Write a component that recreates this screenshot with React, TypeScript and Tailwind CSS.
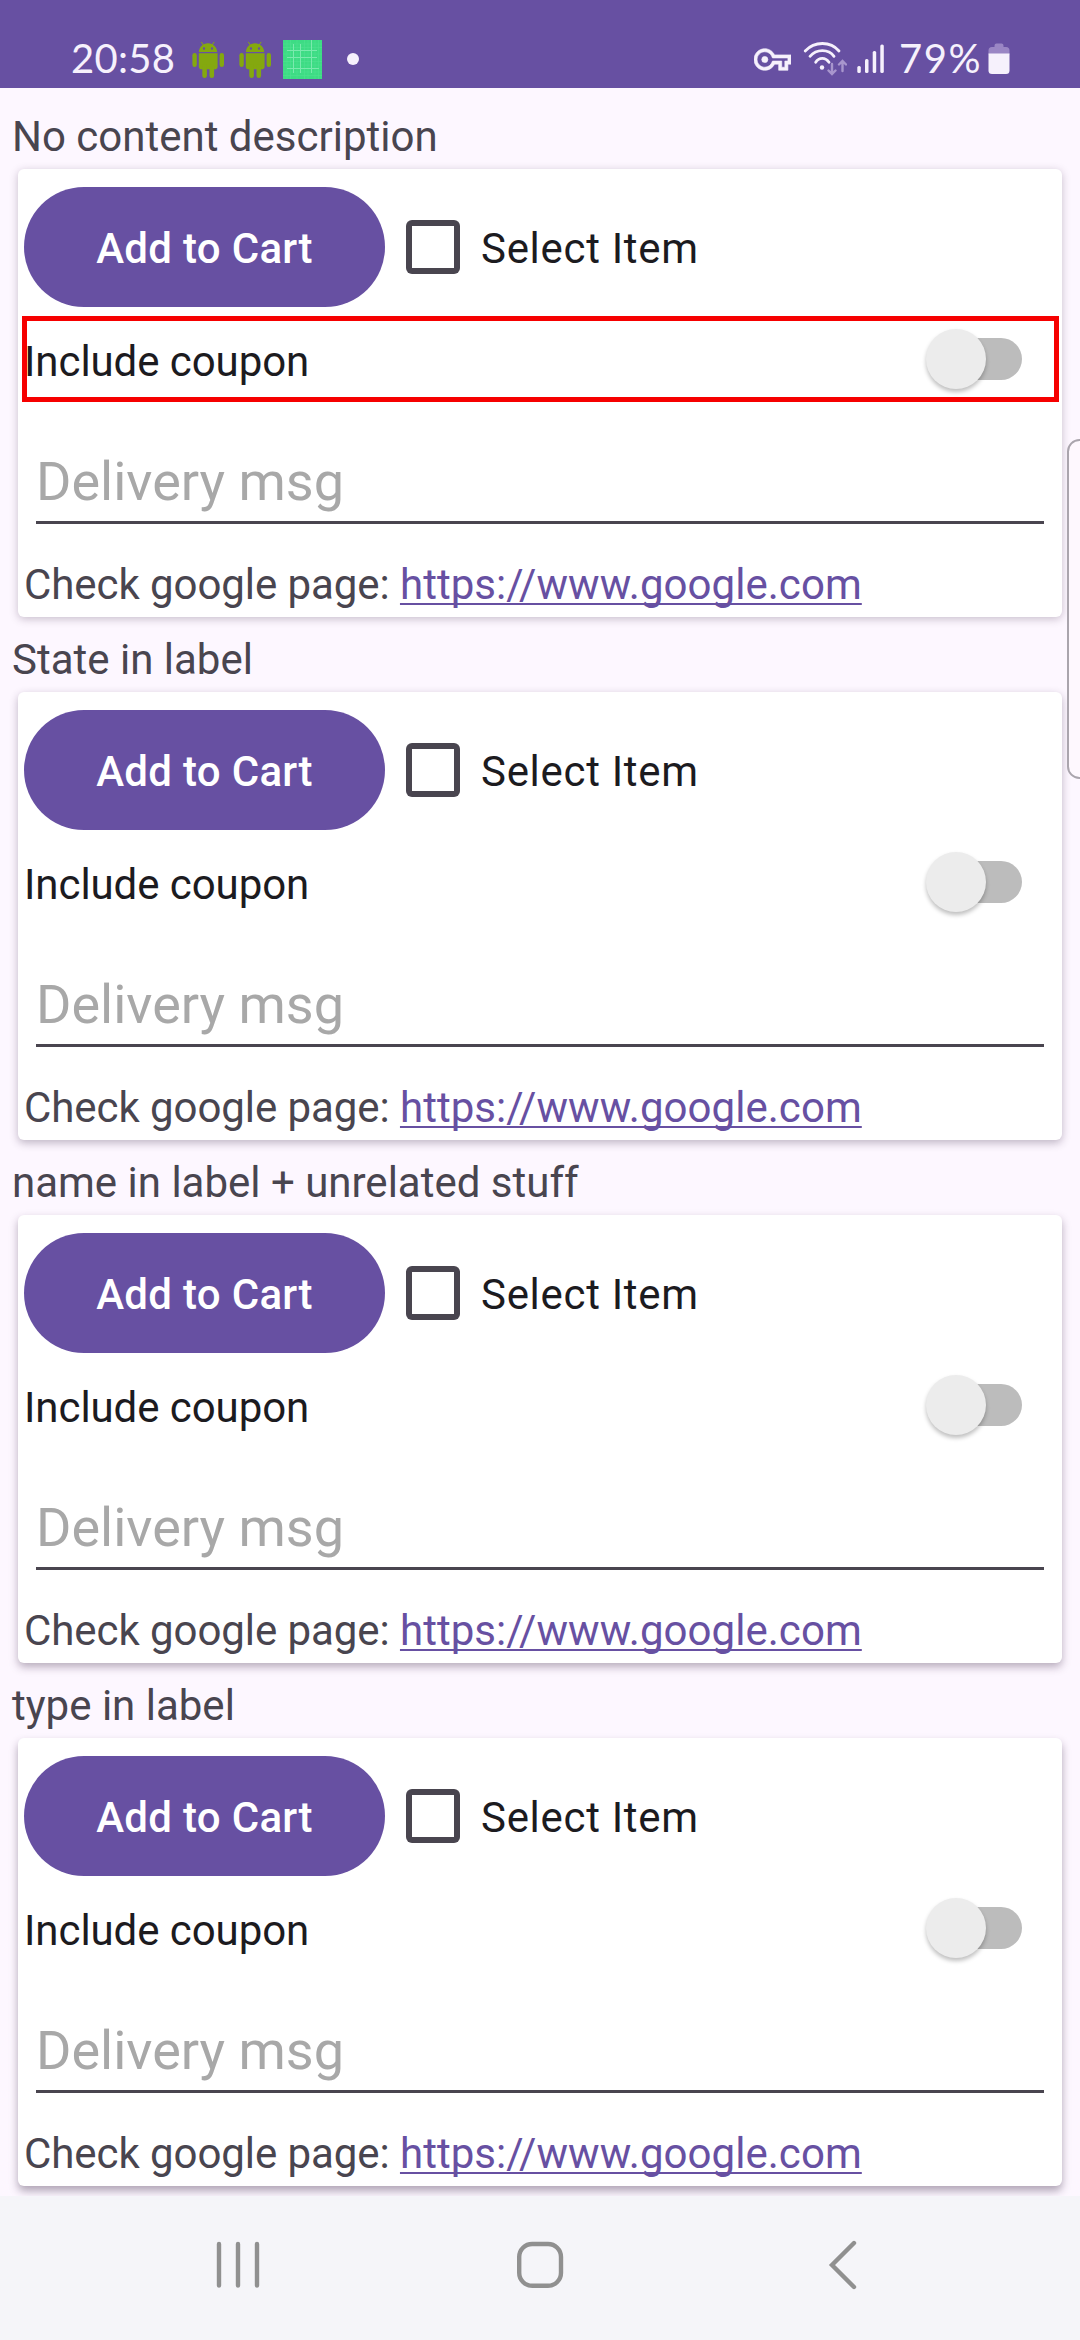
const sections = [
  { title: "No content description", shadow: "shadow-[0_2px_8px_rgba(60,40,70,0.28)]" },
  { title: "State in label", shadow: "shadow-[0_3px_8px_rgba(60,40,70,0.32)]" },
  { title: "name in label + unrelated stuff", shadow: "shadow-[0_4px_8px_rgba(60,40,70,0.36)]" },
  { title: "type in label", shadow: "shadow-[0_5px_8px_rgba(60,40,70,0.4)]" },
];

function AndroidBot() {
  return (
    <svg width="33" height="39" viewBox="0 0 33 39" fill="#84a80f">
      <path d="M9.5 2.2 11.3 5M22 2.2 20.2 5" stroke="#84a80f" strokeWidth="1" strokeLinecap="round" />
      <path fillRule="evenodd" d="M6.9 12C7.2 7 11 3.3 16 3.3S24.9 7 25.2 12ZM12 7.3a1.2 1.2 0 1 0 0 2.4 1.2 1.2 0 0 0 0-2.4ZM20 7.3a1.2 1.2 0 1 0 0 2.4 1.2 1.2 0 0 0 0-2.4Z" />
      <path d="M6.8 13.2h18.8v13.2q0 2.8-2.8 2.8H9.6q-2.8 0-2.8-2.8Z" />
      <rect x="0.4" y="13" width="4.4" height="14" rx="2.2" />
      <rect x="27.6" y="13" width="4.4" height="14" rx="2.2" />
      <rect x="10.3" y="24" width="4.6" height="14" rx="2.3" />
      <rect x="17.5" y="24" width="4.6" height="14" rx="2.3" />
    </svg>
  );
}

function GridTile() {
  return (
    <svg width="39" height="39" viewBox="0 0 39 39">
      <rect width="39" height="39" fill="#3ddc84" />
      <path d="M4 0v39M7.500 0v39M14 0v39M21.500 0v39M25 0v39M32 0v39M35.500 0v39M0 4h39M0 7.500h39M0 14h39M0 21.500h39M0 25h39M0 32h39M0 35.500h39" stroke="#4fe090" strokeWidth="0.600" />
      <path d="M10.500 4v29M17.500 4v29M28.500 0v33M4 10.500h30M4 17.500h30M4 28.500h32" stroke="#7aeaae" strokeWidth="1" />
    </svg>
  );
}

function KeyIcon() {
  return (
    <svg width="37" height="37" viewBox="0 0 24 24" fill="#f6f1fc" stroke="#f6f1fc" strokeWidth="0.4">
      <path d="M22 19h-6v-4h-2.68c-1.14 2.42-3.6 4-6.32 4-3.86 0-7-3.14-7-7s3.14-7 7-7c2.72 0 5.17 1.58 6.32 4H24v6h-2v4zm-4-2h2v-4h2v-2H11.94l-.23-.67C11.01 8.34 9.11 7 7 7c-2.76 0-5 2.24-5 5s2.24 5 5 5c2.11 0 4.01-1.34 4.71-3.33l.23-.67H18v4z" />
      <circle cx="7" cy="12" r="2" />
    </svg>
  );
}

function WifiIcon() {
  return (
    <svg width="44" height="36" viewBox="0 0 44 36" fill="none" stroke="#f6f1fc" strokeWidth="2.8" strokeLinecap="round">
      <path d="M2.200 10C11.500 0 27.500 0 36 10M7 15.300C13.500 7.800 25.500 7.800 31 15.300M12.700 21.300C16 16 22.500 16 26 21.300" />
      <circle cx="19" cy="26.500" r="2.200" fill="#f6f1fc" stroke="none" />
      <path d="M29 23v9.500M25.500 29.500 29 33l3.500-3.500M39.500 30v-9.500M36 23.500l3.500-3.500 3.500 3.500" stroke="#a896cd" strokeWidth="2.400" />
    </svg>
  );
}

function SignalIcon() {
  return (
    <svg width="28" height="30" viewBox="0 0 28 30" fill="#f6f1fc">
      <rect x="0.300" y="22" width="3.500" height="7" rx="1.500" />
      <rect x="8" y="15" width="3.500" height="14" rx="1.500" />
      <rect x="15.700" y="7" width="3.500" height="22" rx="1.500" />
      <rect x="23.300" y="0.500" width="3.500" height="28.500" rx="1.500" />
    </svg>
  );
}

function BatteryIcon() {
  return (
    <svg width="22" height="32" viewBox="0 0 22 32">
      <path d="M6.500 2.500Q6.500 0.500 8.500 0.500h5q2 0 2 2V4h2.500q3.500 0 3.500 3.500v4H0.500v-4Q0.500 4 4 4h2.500Z" fill="#9a86c4" />
      <path d="M0.500 10.500h21v17q0 3.500-3.500 3.500H4q-3.500 0-3.500-3.500Z" fill="#f6f1fc" />
    </svg>
  );
}

function StatusBar() {
  return (
    <header className="flex h-[88px] items-center bg-[#6750a2] pt-[30px] pl-[71px] text-[40px] leading-[56px] text-[#f6f1fc]">
      <span className="w-[121px] pb-[2px] font-['Lato',sans-serif] tracking-[0.3px]">20:58</span>
      <span className="flex w-[91px] gap-[14px]"><AndroidBot /><AndroidBot /></span>
      <GridTile />
      <span className="ml-[25px] size-3 rounded-full bg-[#f6f1fc]" />
      <span className="ml-[395px]"><KeyIcon /></span>
      <span className="ml-[12px]"><WifiIcon /></span>
      <span className="ml-[10px]"><SignalIcon /></span>
      <span className="ml-[14px] w-[89px] pb-[2px] font-['Lato',sans-serif] tracking-[1.5px]">79%</span>
      <BatteryIcon />
    </header>
  );
}

function Card({ highlighted, shadow }: { highlighted: boolean; shadow: string }) {
  return (
    <div className={`mx-[18px] h-[448px] rounded-[6px] bg-white px-[6px] pt-[18px] ${shadow}`}>
      <div className="flex h-[120px] items-center">
        <button className="h-[120px] w-[361px] rounded-full bg-[#6750a2] pt-[3px] text-[42px] font-medium tracking-[0.3px] text-white">Add to Cart</button>
        <span className="ml-[21px] size-[54px] rounded-[6px] bg-[#49454f] p-[6px]"><span className="block size-full bg-white" /></span>
        <span className="ml-[21px] pt-[3px] text-[42px] tracking-[0.7px] text-[#1c1b1f]">Select Item</span>
      </div>
      <div className="relative mt-[9px] flex h-[86px] items-center justify-between pr-[32px]">
        <span className="pt-[4px] text-[42px] tracking-[-0.07px] text-[#1c1b1f]">Include coupon</span>
        <span className="flex h-[42px] w-[84px] items-center rounded-full">
          <span className="relative z-10 -ml-[14px] size-[60px] shrink-0 rounded-full bg-[#ececec] shadow-[0_3px_4px_rgba(0,0,0,0.25)]" />
          <span className="-ml-[30px] h-[42px] w-[66px] shrink-0 rounded-r-full bg-[#bcbcbc]" />
        </span>
        {highlighted && <span className="absolute -right-[3px] -left-[2px] inset-y-0 border-[5px] border-[#f60000]" />}
      </div>
      <div className="mx-[12px] mt-[43px] h-[79px] border-b-[3px] border-[#49454f] text-[54px] leading-[73px] text-[#a8a8a8]">Delivery msg</div>
      <p className="mt-[36px] text-[42px] leading-[50px] tracking-[-0.07px] whitespace-nowrap text-[#49454f]">
        Check google page: <a className="tracking-[0.05px] text-[#6750a2] underline decoration-2 underline-offset-[4px] [text-decoration-skip-ink:none]">https://www.google.com</a>
      </p>
    </div>
  );
}

function NavigationBar() {
  return (
    <nav className="flex h-[144px] justify-center bg-[#f5f5f9] pt-[42px]">
      <svg width="650" height="54" viewBox="0 0 650 54" fill="none" stroke="#909090" strokeLinecap="round">
        <path d="M4 6v41.500M23 6v41.500M42 6v41.500" strokeWidth="4.400" />
        <rect x="304.200" y="6" width="41.800" height="41.800" rx="13" strokeWidth="4.400" />
        <path d="M639 5 617 27l22 22" strokeWidth="4.400" />
      </svg>
    </nav>
  );
}

export default function App() {
  return (
    <div className="relative h-[2340px] w-[1080px] overflow-hidden bg-[#fdf7ff] font-['Roboto',sans-serif]">
      <StatusBar />
      <main className="h-[2108px] overflow-hidden pt-[6px]">
        {sections.map(({ title, shadow }, index) => (
          <section key={title}>
            <h2 className="h-[75px] pl-[12px] text-[42px] leading-[86px] font-normal text-[#49454f]">{title}</h2>
            <Card highlighted={index === 0} shadow={shadow} />
          </section>
        ))}
      </main>
      <NavigationBar />
      <aside className="absolute top-[439px] -right-[12px] h-[340px] w-[25px] rounded-[14px] border-2 border-[#aaa5ad] bg-[#fef8fe]" />
    </div>
  );
}
